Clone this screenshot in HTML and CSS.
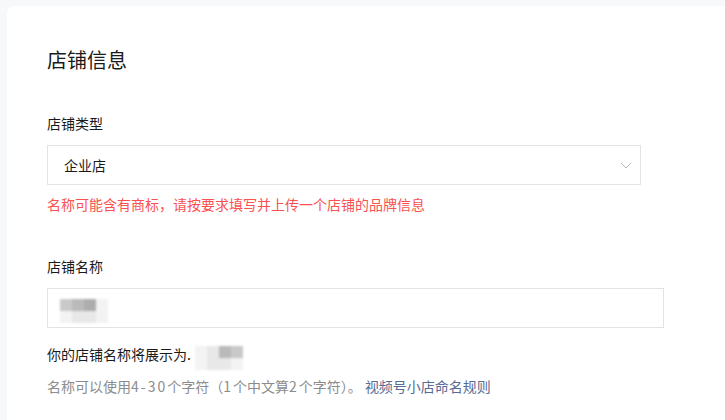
FILE: index.html
```html
<!DOCTYPE html>
<html lang="zh-CN">
<head>
    <meta charset="UTF-8">
    <meta name="viewport" content="width=device-width, initial-scale=1.0">
    <title>店铺信息</title>
    <link rel="stylesheet" href="styles.css">
</head>
<body>
    <div class="page">
        <div class="card">
            <h2 class="card-title">店铺信息</h2>

            <div class="form-item first">
                <div class="form-label">店铺类型</div>
                <div class="select-box">
                    <span class="select-value">企业店</span>
                    <svg class="select-arrow" width="12" height="7" viewBox="0 0 12 7">
                        <path d="M1 1 L6 6 L11 1" fill="none" stroke="#b8b8b8" stroke-width="1"/>
                    </svg>
                </div>
                <div class="form-warn">名称可能含有商标，请按要求填写并上传一个店铺的品牌信息</div>
            </div>

            <div class="form-item">
                <div class="form-label">店铺名称</div>
                <div class="input-box">
                    <!-- name is blurred out in the screenshot -->
                    <div class="mosaic mosaic-input">
                        <span class="m1"></span><span class="m2"></span><span class="m3"></span><span class="m5"></span>
                        <span class="m5"></span><span class="m4"></span><span class="m4"></span><span class="m5"></span>
                    </div>
                </div>
                <div class="form-preview">
                    你的店铺名称将展示为.
                    <div class="mosaic mosaic-preview">
                        <span class="m5"></span><span class="m4"></span><span class="m2"></span><span class="m1"></span>
                        <span class="m5"></span><span class="m4"></span><span class="m4"></span><span class="m5"></span>
                    </div>
                </div>
                <div class="form-tip">名称可以使用<span class="num">4-30</span>个字符（<span class="num">1</span>个中文算<span class="num">2</span>个字符）。 <a class="tip-link" href="#">视频号小店命名规则</a></div>
            </div>
        </div>
    </div>
</body>
</html>
```

FILE: styles.css
```css
html, body {
    margin: 0;
    padding: 0;
}

body {
    font-family: "Noto Sans CJK SC", "Microsoft YaHei", sans-serif;
    background-color: #f7f8fa;
    color: #1a1a1a;
    overflow: hidden;
}

.page {
    padding: 6px 0 0 7px;
}

.card {
    background: #fff;
    border-radius: 8px 0 0 0;
    width: 760px;
    height: 430px;
    padding: 40px 40px 0 40px;
    box-sizing: border-box;
}

.card-title {
    margin: 0;
    font-size: 20px;
    line-height: 28px;
    font-weight: normal;
    color: #1a1a1a;
}

.form-item {
    margin-top: 42px;
}

.form-item.first {
    margin-top: 39px;
}

.form-label {
    font-size: 14px;
    line-height: 20px;
    color: #1a1a1a;
    margin-bottom: 12px;
}

.select-box {
    width: 594px;
    height: 40px;
    border: 1px solid #e3e3e3;
    box-sizing: border-box;
    display: flex;
    align-items: center;
    justify-content: space-between;
    padding: 0 8px 0 16px;
    font-size: 14px;
}

.select-arrow {
    display: block;
}

.form-warn {
    margin-top: 9px;
    font-size: 14px;
    line-height: 20px;
    color: #fa5151;
}

.input-box {
    width: 617px;
    height: 40px;
    border: 1px solid #e3e3e3;
    box-sizing: border-box;
    display: flex;
    align-items: center;
    padding-left: 12px;
}

.form-preview {
    margin-top: 10px;
    font-size: 14px;
    line-height: 20px;
    color: #1a1a1a;
    display: flex;
    align-items: center;
}

.form-tip {
    margin-top: 6px;
    font-size: 14px;
    line-height: 20px;
    color: #8c8c8c;
}

.num {
    letter-spacing: 2px;
}

.tip-link {
    color: #576b95;
    text-decoration: none;
}

.mosaic {
    display: grid;
    grid-template-columns: repeat(4, 12px);
    grid-auto-rows: 12px;
    filter: blur(1.2px);
}

.mosaic-input {
    margin-left: 0;
    margin-top: 6px;
}

.mosaic-preview {
    margin-left: 4px;
    margin-top: 8px;
}

.m1 { background: #c9c9c9; }
.m2 { background: #bab9bc; }
.m3 { background: #aeadad; }
.m4 { background: #e8e8e8; }
.m5 { background: #f3f3f3; }
```
